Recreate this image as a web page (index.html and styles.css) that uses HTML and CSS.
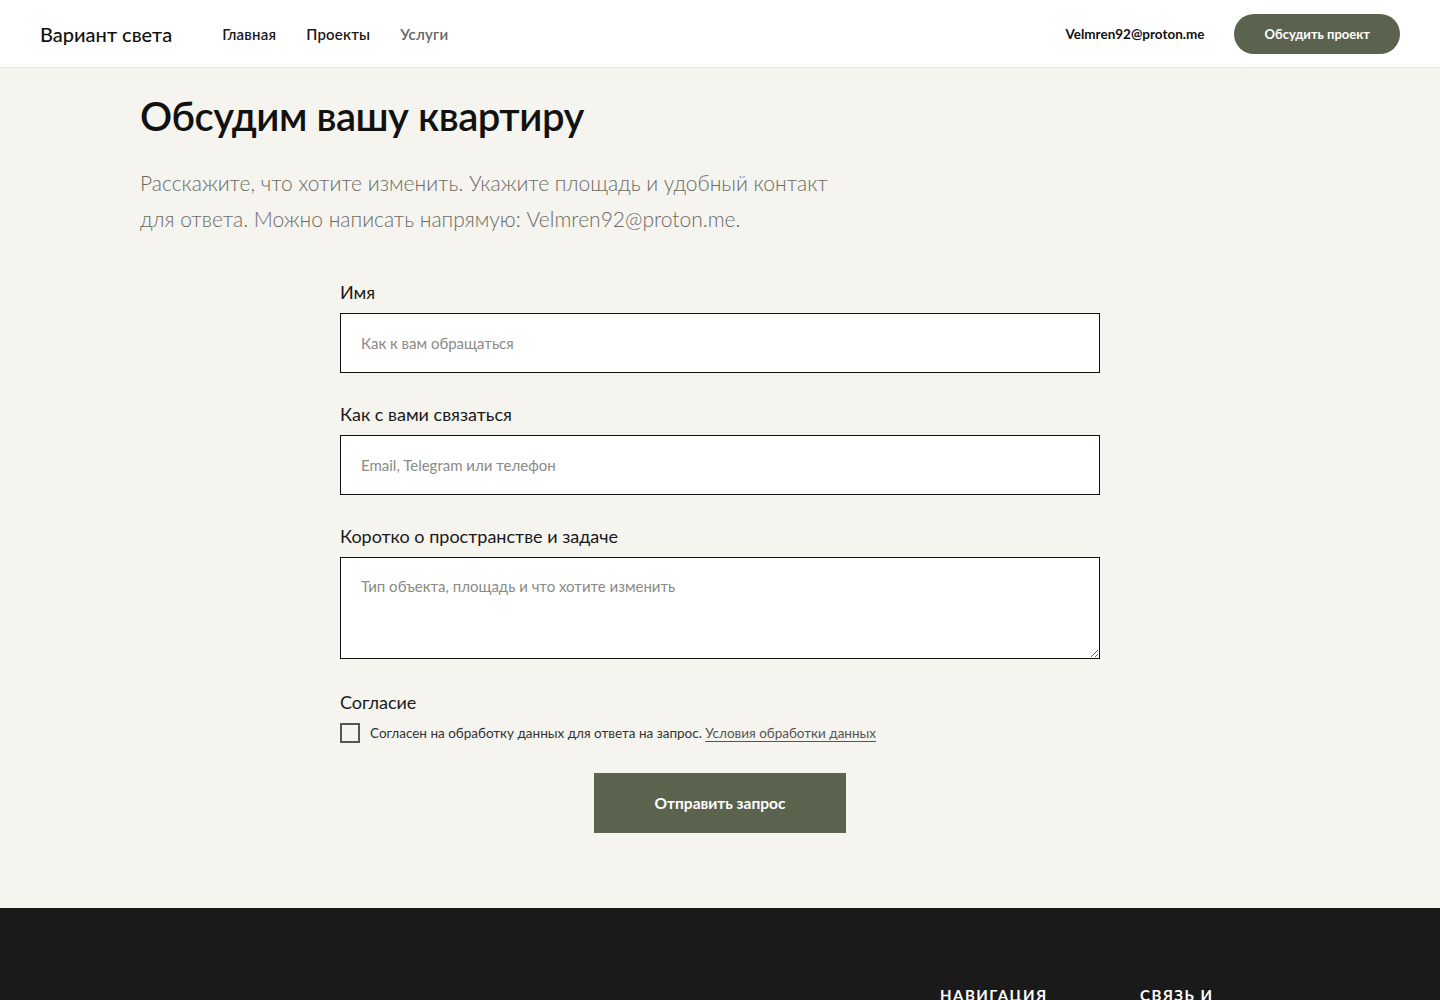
FILE: index.html
```
<!DOCTYPE html>
<html lang="ru">

<head>
    <meta charset="UTF-8">
    <meta name="viewport" content="width=device-width, initial-scale=1.0">
    <title>Вариант света — Контакты</title>
    <link rel="stylesheet" href="styles.css">
</head>

<body>

    <!-- Top bar -->
    <header class="site-header">
        <div class="brand-nav">
            <a class="brand" href="#">Вариант света</a>
            <nav class="main-nav">
                <a href="#">Главная</a>
                <a href="#">Проекты</a>
                <a href="#" class="muted">Услуги</a>
            </nav>
        </div>
        <div class="header-actions">
            <a class="header-mail" href="#">Velmren92@proton.me</a>
            <a class="pill-btn" href="#">Обсудить проект</a>
        </div>
    </header>

    <main class="contact">
        <div class="container">
            <h1>Обсудим вашу квартиру</h1>
            <p class="lead">Расскажите, что хотите изменить. Укажите площадь и удобный контакт для ответа. Можно
                написать напрямую: Velmren92@proton.me.</p>

            <form class="request-form">
                <div class="field">
                    <label for="name">Имя</label>
                    <input type="text" id="name" placeholder="Как к вам обращаться">
                </div>

                <div class="field">
                    <label for="contact">Как с вами связаться</label>
                    <input type="text" id="contact" placeholder="Email, Telegram или телефон">
                </div>

                <div class="field field-wide">
                    <label for="task">Коротко о пространстве и задаче</label>
                    <textarea id="task" placeholder="Тип объекта, площадь и что хотите изменить"></textarea>
                </div>

                <div class="field">
                    <span class="field-title">Согласие</span>
                    <div class="consent">
                        <input type="checkbox" id="agree">
                        <label for="agree">Согласен на обработку данных для ответа на запрос. <a href="#">Условия обработки данных</a></label>
                    </div>
                </div>

                <div class="form-submit">
                    <button type="submit">Отправить запрос</button>
                </div>
            </form>
        </div>
    </main>

    <footer class="site-footer">
        <div class="container footer-grid">
            <div></div>
            <h3>Навигация</h3>
            <h3>Связь и</h3>
        </div>
    </footer>

</body>

</html>
```

FILE: styles.css
```
body {
    font-family: 'Lato', 'Noto Sans', sans-serif;
    background-color: #f5f4ef;
    color: #111;
    margin: 0;
}

a {
    color: inherit;
    text-decoration: none;
}

.container {
    width: 1160px;
    margin: 0 auto;
}

/* Header */
.site-header {
    height: 68px;
    box-sizing: border-box;
    background-color: #fff;
    border-bottom: 1px solid #e6e6e2;
    display: flex;
    align-items: center;
    justify-content: space-between;
    padding: 0 40px;
}

.brand-nav {
    display: flex;
    align-items: center;
    gap: 50px;
}

.brand {
    font-size: 20px;
    font-weight: 500;
    color: #111;
}

.main-nav {
    display: flex;
    gap: 30px;
}

.main-nav a {
    font-size: 15px;
    font-weight: 600;
    letter-spacing: 0.2px;
    color: #1a1a1a;
}

.main-nav a.muted {
    color: #666;
}

.header-actions {
    display: flex;
    align-items: center;
    gap: 30px;
}

.header-mail {
    font-size: 13.5px;
    font-weight: 700;
    color: #111;
}

.pill-btn {
    background-color: #5b634e;
    color: #fff;
    font-size: 13px;
    font-weight: 700;
    height: 40px;
    padding: 0 30px;
    border-radius: 20px;
    display: flex;
    align-items: center;
}

/* Contact section */
.contact {
    padding: 24px 0 75px;
}

.contact h1 {
    font-size: 40px;
    font-weight: 600;
    line-height: 48px;
    margin: 0 0 25px;
    letter-spacing: -0.5px;
}

.lead {
    font-size: 21px;
    font-weight: 300;
    line-height: 36px;
    color: #6b6b66;
    max-width: 700px;
    margin: 0 0 42px;
}

.request-form {
    width: 760px;
    margin: 0 auto;
}

.field {
    margin-bottom: 28px;
}

.field-wide {
    margin-bottom: 30px;
}

.field > label,
.field-title {
    display: block;
    font-size: 18px;
    line-height: 26px;
    color: #1a1a1a;
    margin-bottom: 8px;
}

.field input[type="text"],
.field textarea {
    display: block;
    width: 100%;
    box-sizing: border-box;
    border: 1px solid #111;
    background-color: #fff;
    font-family: inherit;
    font-size: 15px;
    color: #111;
    padding: 0 20px;
    margin: 0;
    border-radius: 0;
}

.field input[type="text"] {
    height: 60px;
}

.field textarea {
    height: 102px;
    padding-top: 19px;
    resize: vertical;
}

.field input::placeholder,
.field textarea::placeholder {
    color: #8a8a86;
}

.consent {
    display: flex;
    align-items: center;
    gap: 10px;
    font-size: 13.5px;
    line-height: 20px;
    color: #333;
}

.consent input {
    appearance: none;
    width: 20px;
    height: 20px;
    margin: 0;
    border: 2px solid #555;
    box-sizing: border-box;
    background-color: transparent;
}

.consent a {
    color: #555;
    text-decoration: underline;
    text-underline-offset: 3px;
}

.form-submit {
    display: flex;
    justify-content: center;
    margin-top: 30px;
}

.form-submit button {
    width: 252px;
    height: 60px;
    border: none;
    background-color: #5b634e;
    color: #fff;
    font-family: inherit;
    font-size: 15.5px;
    font-weight: 700;
    cursor: pointer;
}

/* Footer */
.site-footer {
    background-color: #1a1a1a;
    color: #fff;
    padding: 78px 0 40px;
}

.footer-grid {
    display: grid;
    grid-template-columns: 1fr 160px 160px;
    column-gap: 40px;
}

.site-footer h3 {
    margin: 0;
    font-size: 15px;
    font-weight: 700;
    letter-spacing: 1.5px;
    text-transform: uppercase;
}
```
